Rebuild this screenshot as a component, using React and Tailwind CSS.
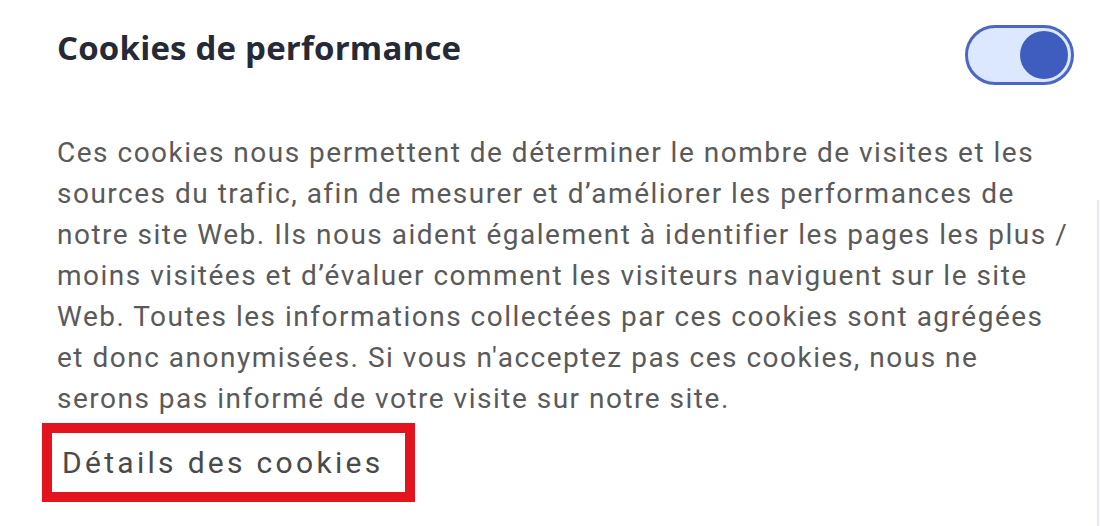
export default function App() {
  return (
    <div className="relative h-[526px] w-[1100px] overflow-hidden bg-white">
      {/* right edge line */}
      <div className="absolute right-[1px] top-[200px] bottom-0 w-[2px] bg-gray-200" />

      <div className="pl-[57px] pr-[26px]">
        {/* HEADER */}
        <div className="flex items-start justify-between">
          <h2
            className="mt-[24px] text-[33px] font-bold leading-[48px] tracking-[0.2px] text-[#262a36]"
            style={{ fontFamily: "'Open Sans', sans-serif" }}
          >
            Cookies de performance
          </h2>
          <div className="mt-[25px] flex h-[60px] w-[109px] items-center justify-end rounded-full border-[3px] border-[#4b66c6] bg-[#dce8ff] pr-[3px]">
            <div className="h-[48px] w-[48px] rounded-full bg-[#3f5cbf]" />
          </div>
        </div>

        {/* DESCRIPTION */}
        <p
          className="mt-[47px] whitespace-nowrap text-[28px] leading-[41px] tracking-[1.5px] text-[#5a5a5a]"
          style={{ fontFamily: "Roboto, sans-serif" }}
        >
          Ces cookies nous permettent de déterminer le nombre de visites et les
          <br />
          sources du trafic, afin de mesurer et d’améliorer les performances de
          <br />
          notre site Web. Ils nous aident également à identifier les pages les plus /
          <br />
          moins visitées et d’évaluer comment les visiteurs naviguent sur le site
          <br />
          Web. Toutes les informations collectées par ces cookies sont agrégées
          <br />
          et donc anonymisées. Si vous n'acceptez pas ces cookies, nous ne
          <br />
          serons pas informé de votre visite sur notre site.
        </p>
      </div>

      {/* DETAILS LINK */}
      <div className="ml-[42px] mt-[4px] flex h-[79px] w-[373px] items-center border-[10px] border-[#e3141e] pl-[10px]">
        <span
          className="text-[30px] tracking-[3.3px] text-[#4a4a4a]"
          style={{ fontFamily: "Roboto, sans-serif" }}
        >
          Détails des cookies
        </span>
      </div>
    </div>
  );
}
